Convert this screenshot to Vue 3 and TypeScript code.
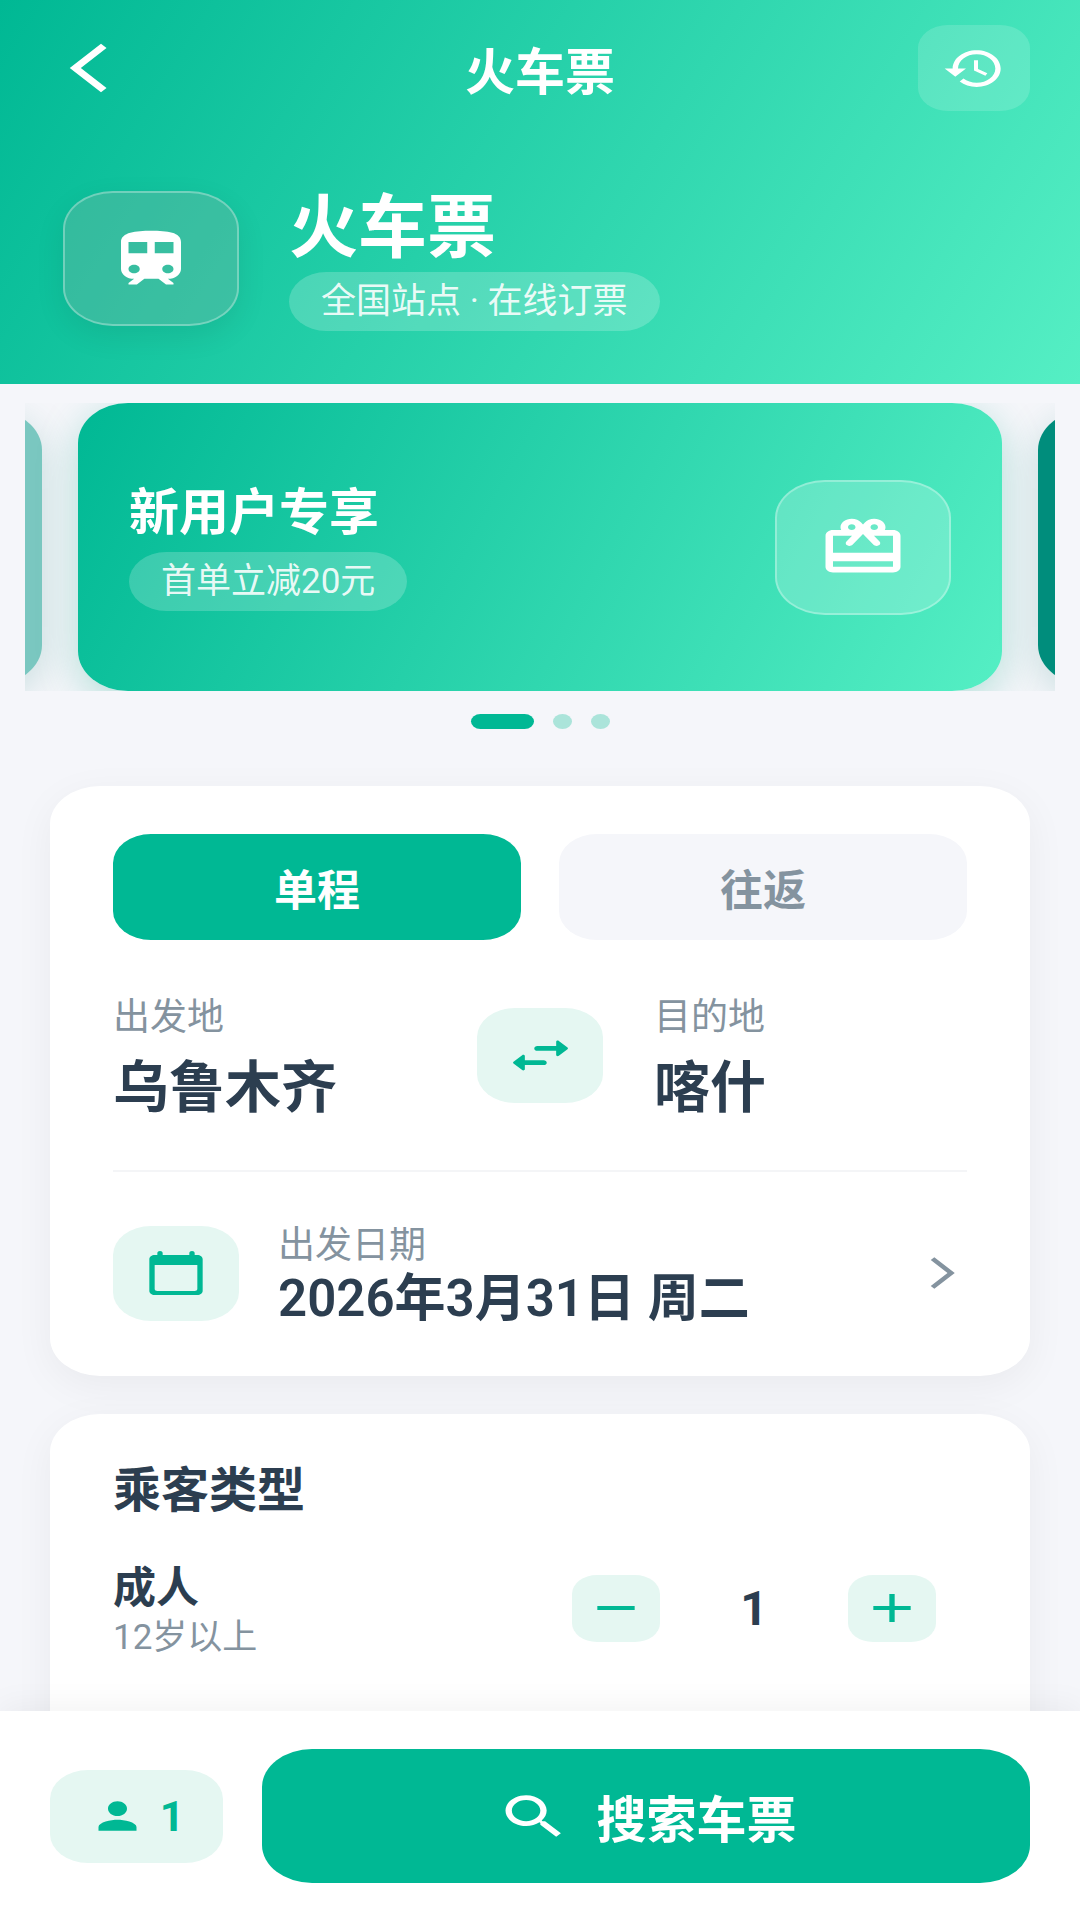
<script setup lang="ts">
import { ref } from 'vue'

type Trip = 'single' | 'round'

const trips: { id: Trip; label: string }[] = [
  { id: 'single', label: '单程' },
  { id: 'round', label: '往返' },
]
const trip = ref<Trip>('single')
const from = ref('乌鲁木齐')
const to = ref('喀什')
const adults = ref(1)
const slide = ref(0)

function swapCities() {
  const previous = from.value
  from.value = to.value
  to.value = previous
}

function changeAdults(step: number) {
  adults.value = Math.max(1, adults.value + step)
}
</script>

<template>
  <div class="page">
    <div class="scroll">
      <header class="header">
        <nav class="nav">
          <button class="back" type="button" aria-label="返回">
            <svg width="75" height="58" viewBox="0 0 24 24" preserveAspectRatio="none">
              <path d="M17.77 3.77 16 2 6 12l10 10 1.77-1.77L9.54 12z" />
            </svg>
          </button>
          <h1 class="nav-title">火车票</h1>
          <button class="history" type="button" aria-label="历史">
            <svg width="64" height="49" viewBox="0 0 24 24" preserveAspectRatio="none">
              <path d="M13 3c-4.97 0-9 4.03-9 9H1l3.89 3.89.07.14L9 12H6c0-3.87 3.13-7 7-7s7 3.13 7 7-3.13 7-7 7c-1.93 0-3.68-.79-4.94-2.06l-1.42 1.42C8.27 19.99 10.51 21 13 21c4.97 0 9-4.03 9-9s-4.03-9-9-9zm-1 5v5l4.28 2.54.72-1.21-3.5-2.08V8H12z" />
            </svg>
          </button>
        </nav>
        <div class="hero">
          <div class="glass glass-train">
            <svg width="90" height="68" viewBox="0 0 24 24" preserveAspectRatio="none">
              <path d="M12 2c-4 0-8 .5-8 4v9.5C4 17.43 5.57 19 7.5 19L6 20.5v.5h2.23l2-2H14l2 2h2v-.5L16.5 19c1.93 0 3.5-1.57 3.5-3.5V6c0-3.5-3.58-4-8-4zM7.5 17c-.83 0-1.5-.67-1.5-1.5S6.67 14 7.5 14s1.5.67 1.5 1.5S8.33 17 7.5 17zm3.5-7H6V6h5v4zm2 0V6h5v4h-5zm3.5 7c-.83 0-1.5-.67-1.5-1.5s.67-1.5 1.5-1.5 1.5.67 1.5 1.5-.67 1.5-1.5 1.5z" />
            </svg>
          </div>
          <div>
            <h2 class="hero-title">火车票</h2>
            <p class="pill">全国站点 · 在线订票</p>
          </div>
        </div>
      </header>

      <section class="carousel" aria-label="优惠活动">
        <div class="slide slide-side slide-prev"></div>
        <div class="slide slide-main">
          <div>
            <h3 class="slide-title">新用户专享</h3>
            <p class="pill">首单立减20元</p>
          </div>
          <div class="glass">
            <svg width="90" height="68" viewBox="0 0 24 24" preserveAspectRatio="none">
              <path d="M20 6h-2.18c.11-.31.18-.65.18-1 0-1.66-1.34-3-3-3-1.05 0-1.96.54-2.5 1.35l-.5.67-.5-.68C10.96 2.54 10.05 2 9 2 7.34 2 6 3.34 6 5c0 .35.07.69.18 1H4c-1.11 0-1.99.89-1.99 2L2 19c0 1.11.89 2 2 2h16c1.11 0 2-.89 2-2V8c0-1.11-.89-2-2-2zm-5-2c.55 0 1 .45 1 1s-.45 1-1 1-1-.45-1-1 .45-1 1-1zM9 4c.55 0 1 .45 1 1s-.45 1-1 1-1-.45-1-1 .45-1 1-1zm11 15H4v-2h16v2zm0-5H4V8h5.08L7.59 10.02c-.33.45-.23 1.08.22 1.4.44.32 1.07.22 1.39-.22L12 7.4l2.8 3.8c.32.44.95.54 1.39.22.45-.32.55-.95.22-1.4L14.92 8H20v6z" />
            </svg>
          </div>
        </div>
        <div class="slide slide-side"></div>
      </section>
      <div class="dots">
        <span v-for="n in 3" :key="n" class="dot" :class="{ active: slide === n - 1 }"></span>
      </div>

      <main class="cards">
        <section class="card">
          <div class="tabs">
            <button
              v-for="item in trips"
              :key="item.id"
              class="tab"
              :class="{ active: trip === item.id }"
              type="button"
              @click="trip = item.id"
            >
              {{ item.label }}
            </button>
          </div>
          <div class="route">
            <div class="place">
              <span class="label">出发地</span>
              <span class="city">{{ from }}</span>
            </div>
            <button class="tile" type="button" aria-label="交换" @click="swapCities">
              <svg width="75" height="57" viewBox="0 0 24 24" preserveAspectRatio="none">
                <path d="M6.14 11.86l-2.78 2.79c-.19.2-.19.51 0 .71l2.78 2.79c.31.32.85.09.85-.35V16H13c.55 0 1-.45 1-1s-.45-1-1-1H6.99v-1.79c0-.45-.54-.67-.85-.35zm14.51-3.21l-2.78-2.79c-.31-.32-.85-.09-.85.35V8H11c-.55 0-1 .45-1 1s.45 1 1 1h6.01v1.79c0 .45.54.67.85.35l2.78-2.79c.2-.19.2-.51.01-.7z" />
              </svg>
            </button>
            <div class="place">
              <span class="label">目的地</span>
              <span class="city">{{ to }}</span>
            </div>
          </div>
          <hr class="divider" />
          <button class="date-row" type="button">
            <span class="tile">
              <svg width="64" height="48" viewBox="0 0 24 24" preserveAspectRatio="none">
                <path d="M20 3h-1V2c0-.55-.45-1-1-1s-1 .45-1 1v1H7V2c0-.55-.45-1-1-1s-1 .45-1 1v1H4c-1.1 0-2 .9-2 2v16c0 1.1.9 2 2 2h16c1.1 0 2-.9 2-2V5c0-1.1-.9-2-2-2zm-1 18H5c-.55 0-1-.45-1-1V8h16v12c0 .55-.45 1-1 1z" />
              </svg>
            </span>
            <span class="date-text">
              <span class="label">出发日期</span>
              <span class="date">2026年3月31日 周二</span>
            </span>
            <svg class="chevron" width="49" height="38" viewBox="0 0 24 24" preserveAspectRatio="none">
              <path d="M6.23 20.23 8 22l10-10L8 2 6.23 3.77 14.46 12z" />
            </svg>
          </button>
        </section>

        <section class="card card-passengers">
          <h3 class="card-title">乘客类型</h3>
          <div class="passenger">
            <div class="passenger-text">
              <span class="passenger-name">成人</span>
              <span class="passenger-note">12岁以上</span>
            </div>
            <div class="counter">
              <button class="step" type="button" aria-label="减少" @click="changeAdults(-1)">
                <svg width="64" height="48" viewBox="0 0 24 24" preserveAspectRatio="none">
                  <path d="M19 13H5v-2h14z" />
                </svg>
              </button>
              <output class="count">{{ adults }}</output>
              <button class="step" type="button" aria-label="增加" @click="changeAdults(1)">
                <svg width="64" height="48" viewBox="0 0 24 24" preserveAspectRatio="none">
                  <path d="M19 13h-6v6h-2v-6H5v-2h6V5h2v6h6z" />
                </svg>
              </button>
            </div>
          </div>
        </section>
      </main>
    </div>

    <footer class="footer">
      <div class="total">
        <svg width="57" height="44" viewBox="0 0 24 24" preserveAspectRatio="none">
          <path d="M12 12c2.21 0 4-1.79 4-4s-1.79-4-4-4-4 1.79-4 4 1.79 4 4 4zm0 2c-2.67 0-8 1.34-8 4v2h16v-2c0-2.66-5.33-4-8-4z" />
        </svg>
        <span>{{ adults }}</span>
      </div>
      <button class="search" type="button">
        <svg width="76" height="57" viewBox="0 0 24 24" preserveAspectRatio="none">
          <path d="M15.5 14h-.79l-.28-.27C15.41 12.59 16 11.11 16 9.5 16 5.91 13.09 3 9.5 3S3 5.91 3 9.5 5.91 16 9.5 16c1.61 0 3.09-.59 4.23-1.57l.27.28v.79l5 4.99L20.49 19l-4.99-5zm-6 0C7.01 14 5 11.99 5 9.5S7.01 5 9.5 5 14 7.01 14 9.5 11.99 14 9.5 14z" />
        </svg>
        <span>搜索车票</span>
      </button>
    </footer>
  </div>
</template>

<style>
body {
  margin: 0;
  background: #f5f6fa;
}
</style>

<style scoped>
.page {
  display: flex;
  flex-direction: column;
  height: 100vh;
  background: #f5f6fa;
  color: #2c3e50;
  font-family: Roboto, "Noto Sans CJK SC", sans-serif;
}

.page *,
.page {
  box-sizing: border-box;
}

h1,
h2,
h3,
p {
  margin: 0;
}

button {
  padding: 0;
  border: 0;
  background: none;
  color: inherit;
  font: inherit;
  cursor: pointer;
}

svg {
  display: block;
  flex: none;
  fill: currentColor;
}

.scroll {
  flex: 1;
  min-height: 0;
  overflow-y: auto;
  scrollbar-width: none;
}

.header {
  padding: 25px 50px 53px;
  background: linear-gradient(122deg, #00b894, #55efc4);
  color: #fff;
}

.nav {
  display: grid;
  grid-template-columns: 1fr auto 1fr;
  align-items: center;
}

.nav-title {
  padding-top: 10px;
  font-size: 50px;
  font-weight: 700;
  line-height: 60px;
}

.back {
  display: flex;
  align-items: center;
  justify-content: center;
  width: 76px;
  height: 86px;
}

.history {
  display: flex;
  align-items: center;
  justify-content: center;
  justify-self: end;
  width: 112px;
  height: 86px;
  border-radius: 30px / 23px;
  background: rgba(255, 255, 255, 0.15);
}

.hero {
  display: flex;
  align-items: center;
  gap: 50px;
  margin: 75px 0 0 13px;
}

.glass {
  display: flex;
  align-items: center;
  justify-content: center;
  flex: none;
  width: 176px;
  height: 135px;
  border: 2px solid rgba(255, 255, 255, 0.3);
  border-radius: 50px / 38px;
  background: rgba(255, 255, 255, 0.2);
}

.glass-train {
  background: rgba(110, 180, 162, 0.4);
  box-shadow: 0 10px 30px rgba(0, 0, 0, 0.08);
}

.hero-title {
  font-size: 69px;
  font-weight: 700;
  line-height: 86px;
}

.pill {
  width: fit-content;
  padding: 0 32px;
  border-radius: 38px / 30px;
  background: rgba(255, 255, 255, 0.2);
  color: rgba(255, 255, 255, 0.9);
  font-size: 35px;
  line-height: 59px;
  white-space: nowrap;
}

.carousel {
  display: flex;
  align-items: center;
  justify-content: center;
  gap: 36px;
  height: 288px;
  margin: 19px 25px 0;
  overflow: hidden;
}

.slide {
  flex: 0 0 calc(100% - 106px);
  border-radius: 50px / 40px;
}

.slide-main {
  display: flex;
  align-items: center;
  justify-content: space-between;
  height: 288px;
  padding: 0 51px;
  background: linear-gradient(118deg, #00b894, #55efc4);
  box-shadow: 0 10px 40px rgba(0, 160, 130, 0.28);
  color: #fff;
}

.slide-side {
  height: 275px;
  background: #008d7c;
  box-shadow: 0 10px 40px rgba(0, 120, 105, 0.2);
}

.slide-prev {
  background: #7ac7c0;
}

.slide-title {
  margin-bottom: 9px;
  font-size: 50px;
  font-weight: 700;
  line-height: 60px;
}

.dots {
  display: flex;
  justify-content: center;
  gap: 19px;
  margin-top: 23px;
}

.dot {
  width: 19px;
  height: 15px;
  border-radius: 50%;
  background: #abe4da;
}

.dot.active {
  width: 63px;
  border-radius: 10px / 8px;
  background: #00b894;
}

.cards {
  display: flex;
  flex-direction: column;
  gap: 38px;
  padding: 57px 50px 38px;
}

.card {
  padding: 48px 63px;
  border-radius: 50px / 38px;
  background: #fff;
  box-shadow: 0 10px 40px rgba(0, 0, 0, 0.05);
}

.card-passengers {
  padding-bottom: 120px;
}

.tabs {
  display: flex;
  gap: 38px;
}

.tab {
  flex: 1;
  height: 106px;
  border-radius: 38px / 29px;
  background: #f5f6fa;
  color: #84939f;
  font-size: 43px;
  font-weight: 700;
}

.tab.active {
  background: #00b894;
  color: #fff;
}

.route {
  display: flex;
  align-items: center;
  gap: 51px;
  margin: 46px 0;
}

.place {
  display: flex;
  flex: 1;
  flex-direction: column;
  gap: 10px;
  padding-top: 8px;
}

.label {
  color: #84939f;
  font-size: 37px;
  line-height: 48px;
}

.city {
  font-size: 56px;
  font-weight: 700;
  line-height: 72px;
}

.tile {
  display: flex;
  align-items: center;
  justify-content: center;
  flex: none;
  width: 126px;
  height: 95px;
  border-radius: 38px / 29px;
  background: #e5f7f2;
  color: #00b894;
}

.divider {
  height: 2px;
  margin: 0;
  border: 0;
  background: #f4f5f7;
}

.date-row {
  display: flex;
  align-items: center;
  width: 100%;
  margin-top: 46px;
  text-align: left;
}

.date-text {
  display: flex;
  flex: 1;
  flex-direction: column;
  margin-left: 39px;
  padding-top: 4px;
}

.date {
  font-size: 51px;
  font-weight: 600;
  line-height: 58px;
}

.chevron {
  color: #84939f;
}

.card-title {
  font-size: 48px;
  font-weight: 700;
  line-height: 58px;
}

.passenger {
  display: flex;
  align-items: center;
  justify-content: space-between;
  margin-top: 35px;
  padding-right: 31px;
}

.passenger-text {
  display: flex;
  flex-direction: column;
  padding-top: 6px;
}

.passenger-name {
  font-size: 43px;
  font-weight: 700;
  line-height: 54px;
}

.passenger-note {
  color: #84939f;
  font-size: 35px;
  line-height: 46px;
}

.counter {
  display: flex;
  align-items: center;
}

.step {
  display: flex;
  align-items: center;
  justify-content: center;
  width: 88px;
  height: 67px;
  border-radius: 25px / 19px;
  background: #e5f7f2;
  color: #00b894;
}

.count {
  width: 188px;
  font-size: 48px;
  font-weight: 700;
  text-align: center;
}

.footer {
  display: flex;
  align-items: center;
  gap: 39px;
  position: relative;
  padding: 38px 50px 37px;
  background: #fff;
  box-shadow: 0 -5px 30px rgba(0, 0, 0, 0.05);
}

.total {
  display: flex;
  align-items: center;
  justify-content: center;
  gap: 14px;
  width: 173px;
  height: 93px;
  border-radius: 38px / 29px;
  background: #e5f7f2;
  color: #00b894;
  font-size: 43px;
  font-weight: 700;
}

.search {
  display: flex;
  align-items: center;
  justify-content: center;
  gap: 25px;
  flex: 1;
  height: 134px;
  border-radius: 50px / 38px;
  background: #00b894;
  color: #fff;
  font-size: 50px;
  font-weight: 700;
}
</style>
